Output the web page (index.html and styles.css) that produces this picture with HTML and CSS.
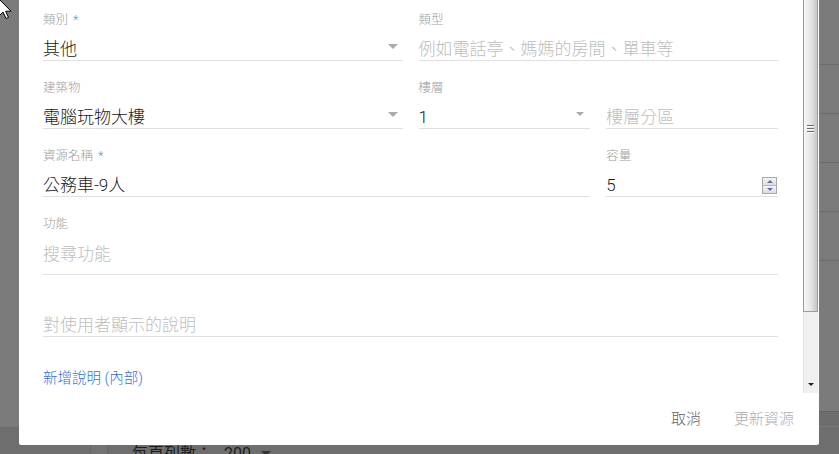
FILE: index.html
```html
<!DOCTYPE html>
<html lang="zh-Hant">
<head>
    <meta charset="UTF-8">
    <title>更新資源</title>
    <link rel="stylesheet" href="styles.css">
</head>
<body>

    <!-- page behind the modal -->
    <div class="page">
        <div class="rows">
            <div class="row"></div>
            <div class="row"></div>
            <div class="row"></div>
            <div class="row"></div>
            <div class="row"></div>
        </div>
        <div class="table-band"></div>
        <div class="pager">
            <span class="pager-box"></span>
            <span class="pager-label">每頁列數：</span>
            <span class="pager-value">200</span>
            <span class="pager-caret"></span>
        </div>
    </div>

    <div class="dialog">
        <div class="dialog-body">
            <div class="form-area">
                <div class="form-grid">
                    <div class="field span-2">
                        <div class="label">類別 <span class="req">*</span></div>
                        <div class="input">
                            <span class="value">其他</span>
                            <span class="arrow"></span>
                        </div>
                    </div>
                    <div class="field span-2">
                        <div class="label">類型</div>
                        <div class="input">
                            <span class="placeholder">例如電話亭、媽媽的房間、單車等</span>
                        </div>
                    </div>

                    <div class="field span-2">
                        <div class="label">建築物</div>
                        <div class="input">
                            <span class="value">電腦玩物大樓</span>
                            <span class="arrow"></span>
                        </div>
                    </div>
                    <div class="field">
                        <div class="label">樓層</div>
                        <div class="input">
                            <span class="value">1</span>
                            <span class="arrow arrow-small"></span>
                        </div>
                    </div>
                    <div class="field">
                        <div class="label">&nbsp;</div>
                        <div class="input">
                            <span class="placeholder">樓層分區</span>
                        </div>
                    </div>

                    <div class="field span-3">
                        <div class="label">資源名稱 <span class="req">*</span></div>
                        <div class="input">
                            <span class="value">公務車-9人</span>
                        </div>
                    </div>
                    <div class="field">
                        <div class="label">容量</div>
                        <div class="input">
                            <span class="value">5</span>
                            <span class="spinner">
                                <span class="spin-btn"><span class="spin-up"></span></span>
                                <span class="spin-btn"><span class="spin-down"></span></span>
                            </span>
                        </div>
                    </div>

                    <div class="field span-4">
                        <div class="label">功能</div>
                        <div class="input input-chips">
                            <span class="placeholder">搜尋功能</span>
                        </div>
                    </div>

                    <div class="field span-4 field-desc">
                        <div class="input">
                            <span class="placeholder">對使用者顯示的說明</span>
                        </div>
                    </div>
                </div>

                <div class="add-link">新增說明 (內部)</div>
            </div>

            <div class="scrollbar">
                <div class="thumb">
                    <div class="grip">
                        <span></span><span></span><span></span>
                    </div>
                </div>
                <div class="track">
                    <span class="track-arrow"></span>
                </div>
            </div>
        </div>

        <div class="dialog-footer">
            <span class="btn">取消</span>
            <span class="btn btn-disabled">更新資源</span>
        </div>
    </div>

    <svg class="cursor" width="14" height="20" viewBox="0 0 14 20">
        <path d="M-1 -1 L-1 16 L3 12 L6 18.5 L8.5 17.5 L5.7 11.2 L11 11.2 Z" fill="#fff" stroke="#000" stroke-width="1"/>
    </svg>

</body>
</html>
```

FILE: styles.css
```css
body {
    margin: 0;
    width: 839px;
    height: 454px;
    overflow: hidden;
    position: relative;
    background-color: #7b7b7b;
    font-family: Roboto, "Noto Sans CJK TC", sans-serif;
    font-weight: 300;
}

/* page under the overlay */
.page {
    height: 454px;
    display: flex;
    flex-direction: column;
}
.rows {
    flex: 1;
    padding-top: 16px;
    padding-left: 100px;
}
.row {
    height: 48px;
    border-bottom: 1px solid #6c6c6c;
}
.table-band {
    height: 14px;
    margin-left: 100px;
    background-color: #6d6d6d;
    border-top: 1px solid #636363;
}
.pager {
    height: 27px;
    border-top: 1px solid #777;
    background-color: #6e6e6e;
    display: flex;
    align-items: flex-start;
    color: #1c1c1c;
    font-size: 16px;
    line-height: 20px;
    font-weight: 400;
}
.pager-box {
    width: 16px;
    height: 100%;
    margin-left: 90px;
    background-color: #737373;
    border-left: 1px solid #666;
    border-right: 1px solid #666;
}
.pager-label {
    margin-left: 24px;
    padding-top: 17px;
}
.pager-value {
    margin-left: 12px;
    padding-top: 17px;
}
.pager-caret {
    margin-left: 10px;
    margin-top: 24px;
    border-top: 5px solid #333;
    border-left: 5px solid transparent;
    border-right: 5px solid transparent;
}

/* modal */
.dialog {
    position: absolute;
    left: 19px;
    top: 0;
    width: 800px;
    height: 445px;
    background-color: #fff;
    border-radius: 0 0 2px 2px;
    display: flex;
    flex-direction: column;
}
.dialog-body {
    height: 393px;
    display: flex;
}
.form-area {
    flex: 1;
    padding: 13px 25px 0 24px;
}
.form-grid {
    display: grid;
    grid-template-columns: repeat(4, 1fr);
    column-gap: 16px;
    row-gap: 20px;
}
.span-2 { grid-column: span 2; }
.span-3 { grid-column: span 3; }
.span-4 { grid-column: span 4; }

.label {
    font-size: 12.5px;
    line-height: 14px;
    color: #9e9e9e;
    margin-bottom: 12px;
}
.req {
    color: #29a9f0;
    margin-left: 2px;
}
.input {
    display: flex;
    align-items: center;
    height: 21px;
    font-size: 17px;
    line-height: 23px;
    border-bottom: 1px solid #e0e0e0;
}
.input-chips {
    height: 32px;
    align-items: flex-start;
    padding-top: 0;
    box-sizing: border-box;
}
.field-desc {
    margin-top: 16px;
}
.field-desc .input {
    height: 26px;
    padding-top: 4px;
    align-items: flex-start;
    line-height: 20px;
    box-sizing: border-box;
}
.value {
    color: #1a1a1a;
}
.placeholder {
    color: #bdbdbd;
}
.arrow {
    margin-left: auto;
    margin-right: 5px;
    margin-bottom: 7px;
    border-top: 5px solid #ababab;
    border-left: 5px solid transparent;
    border-right: 5px solid transparent;
}
.arrow-small {
    margin-right: 6px;
    border-top-width: 4px;
    border-left-width: 4.5px;
    border-right-width: 4.5px;
}
.spinner {
    margin-left: auto;
    margin-right: 1px;
    width: 13px;
    height: 15px;
    border: 1px solid #a8a8a8;
    display: flex;
    flex-direction: column;
}
.spin-btn {
    flex: 1;
    background: linear-gradient(#f4f4f4, #dedede);
    display: flex;
    align-items: center;
    justify-content: center;
}
.spin-btn + .spin-btn {
    border-top: 1px solid #b8b8b8;
}
.spin-up {
    border-bottom: 3px solid #5f6fb0;
    border-left: 3.5px solid transparent;
    border-right: 3.5px solid transparent;
}
.spin-down {
    border-top: 3px solid #5f6fb0;
    border-left: 3.5px solid transparent;
    border-right: 3.5px solid transparent;
}

.add-link {
    margin-top: 32px;
    font-size: 14.5px;
    line-height: 20px;
    color: #3a6fd8;
}

/* fake classic scrollbar */
.scrollbar {
    width: 15px;
    margin-right: 1px;
    display: flex;
    flex-direction: column;
    background-color: #f0f0f0;
}
.thumb {
    height: 311px;
    border: 1px solid #9c9c9c;
    border-top: none;
    background: linear-gradient(to right, #f6f6f6, #e4e4e4 55%, #c6c6c6);
}
.grip {
    margin: 125px auto 0;
    width: 7px;
    display: flex;
    flex-direction: column;
    gap: 1px;
}
.grip span {
    height: 1px;
    background-color: #6b6b6b;
    border-bottom: 1px solid #fff;
}
.track {
    flex: 1;
    display: flex;
    justify-content: center;
    align-items: flex-end;
    padding-bottom: 7px;
    border-left: 1px solid #e2e2e2;
}
.track-arrow {
    border-top: 3px solid #222;
    border-left: 3px solid transparent;
    border-right: 3px solid transparent;
}

.dialog-footer {
    flex: 1;
    display: flex;
    justify-content: flex-end;
    align-items: center;
    gap: 33px;
    padding-right: 25px;
    font-size: 15px;
    line-height: 20px;
}
.btn {
    color: #5f5f5f;
}
.btn-disabled {
    color: #adadad;
}

.cursor {
    position: absolute;
    left: 0;
    top: 0;
}
```
